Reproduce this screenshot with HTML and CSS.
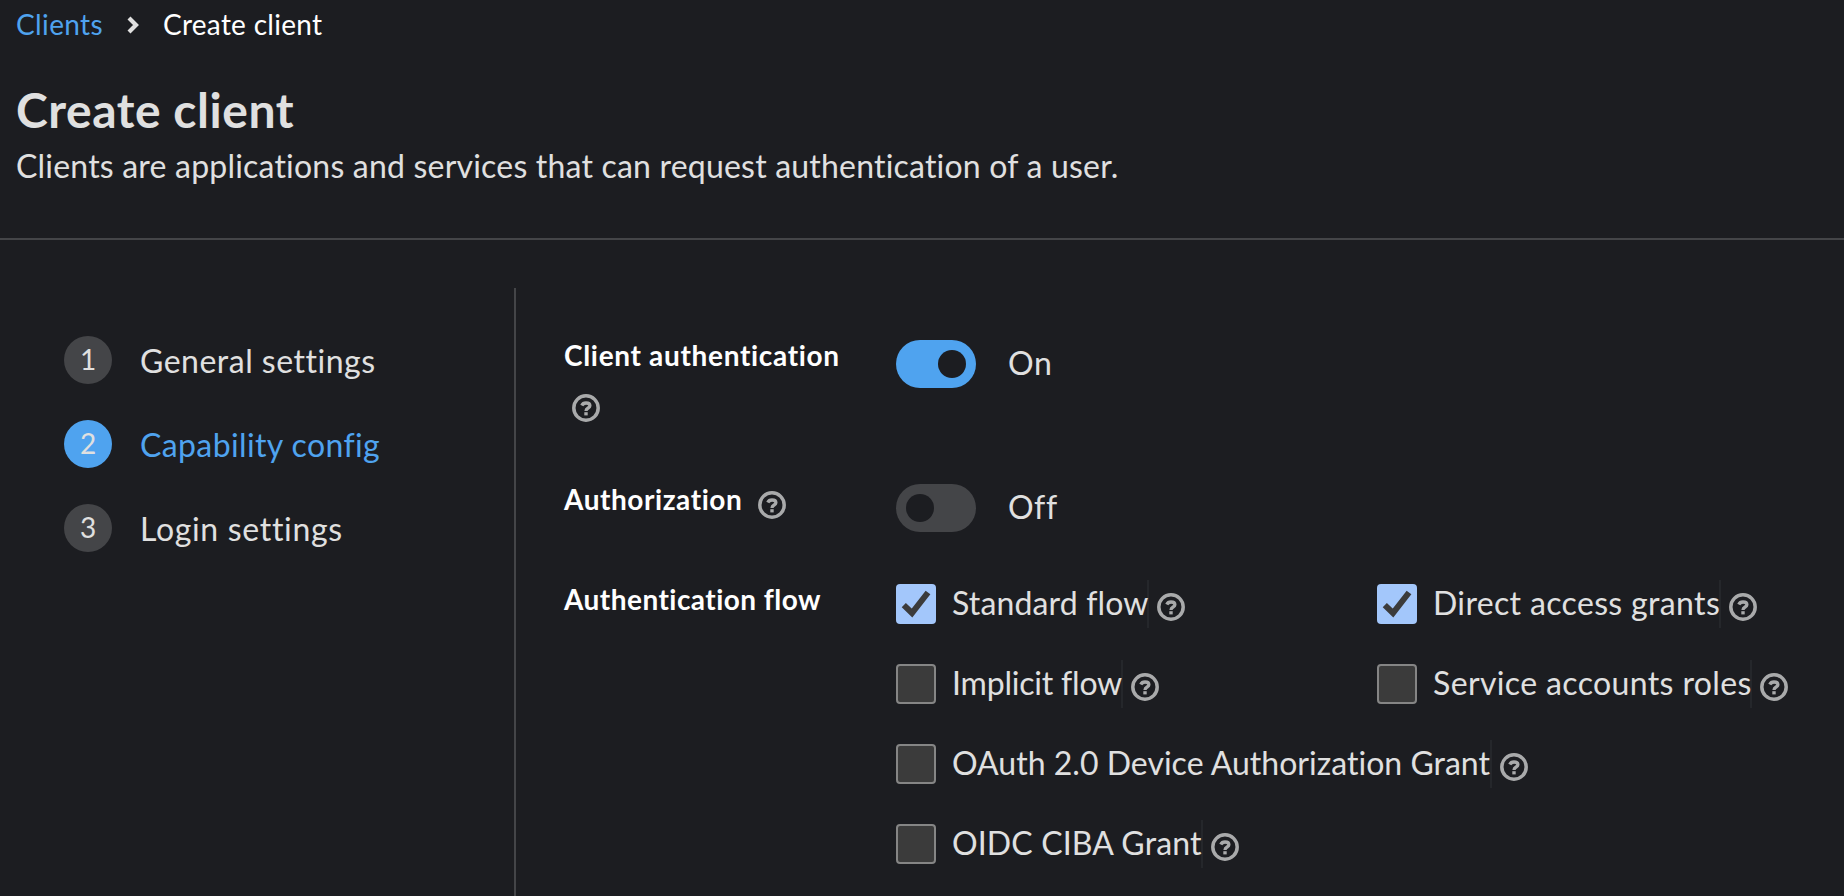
FILE: index.html
```html
<!DOCTYPE html>
<html lang="en">
<head>
<meta charset="utf-8">
<title>Create client</title>
<link rel="stylesheet" href="styles.css">
</head>
<body>
<svg class="sprite" aria-hidden="true">
  <symbol id="help" viewBox="0 0 28 28">
    <circle cx="14" cy="14" r="12.2" fill="none" stroke="currentColor" stroke-width="3.5"/>
    <path d="M9.8 11.5C10.6 9.7 12 9 14 9C16.5 9 17.9 10 17.9 11.8C17.9 14.3 14 13.8 14 17" fill="none" stroke="currentColor" stroke-width="3.3"/>
    <rect x="12.3" y="18.2" width="3.4" height="3.2" fill="currentColor"/>
  </symbol>
  <symbol id="check" viewBox="0 0 40 40">
    <path d="M7.8 21.2L16 29L32 8.5" fill="none" stroke="currentColor" stroke-width="6"/>
  </symbol>
</svg>
<header class="page-header">
  <nav class="breadcrumb">
    <a class="crumb-link">Clients</a>
    <svg class="chevron" viewBox="0 0 12 18"><path d="M2 2L9 9L2 16" fill="none" stroke="currentColor" stroke-width="4.2"/></svg>
    <span class="crumb-current">Create client</span>
  </nav>
  <h1 class="title">Create client</h1>
  <p class="description">Clients are applications and services that can request authentication of a user.</p>
</header>
<main class="wizard">
  <ol class="steps">
    <li class="step"><span class="step-number">1</span><span class="step-name general">General settings</span></li>
    <li class="step current"><span class="step-number">2</span><span class="step-name capability">Capability config</span></li>
    <li class="step"><span class="step-number">3</span><span class="step-name login">Login settings</span></li>
  </ol>
  <form class="form">
    <div class="row">
      <div class="label-col stacked"><span class="label client-auth">Client authentication</span><svg class="help"><use href="#help"/></svg></div>
      <div class="switch on"><span class="track"><span class="knob"></span></span><span class="state">On</span></div>
    </div>
    <div class="row short">
      <div class="label-col"><span class="label authorization">Authorization</span><svg class="help"><use href="#help"/></svg></div>
      <div class="switch"><span class="track"><span class="knob"></span></span><span class="state">Off</span></div>
    </div>
    <div class="row">
      <div class="label-col"><span class="label auth-flow">Authentication flow</span></div>
      <div class="flows">
        <div class="flow"><span class="box checked"><svg><use href="#check"/></svg></span><span class="flow-name standard">Standard flow</span><svg class="help"><use href="#help"/></svg></div>
        <div class="flow"><span class="box checked"><svg><use href="#check"/></svg></span><span class="flow-name direct">Direct access grants</span><svg class="help"><use href="#help"/></svg></div>
        <div class="flow"><span class="box"></span><span class="flow-name implicit">Implicit flow</span><svg class="help"><use href="#help"/></svg></div>
        <div class="flow"><span class="box"></span><span class="flow-name service">Service accounts roles</span><svg class="help"><use href="#help"/></svg></div>
        <div class="flow wide"><span class="box"></span><span class="flow-name oauth">OAuth 2.0 Device Authorization Grant</span><svg class="help"><use href="#help"/></svg></div>
        <div class="flow wide"><span class="box"></span><span class="flow-name ciba">OIDC CIBA Grant</span><svg class="help"><use href="#help"/></svg></div>
      </div>
    </div>
  </form>
</main>
</body>
</html>
```
FILE: styles.css
```css
* { box-sizing: border-box; }
body {
  margin: 0;
  height: 896px;
  overflow: hidden;
  display: flex;
  flex-direction: column;
  background: #1c1d21;
  color: #e0e0e0;
  font: 32px/46px Lato, sans-serif;
  font-variant-ligatures: none;
  white-space: nowrap;
}
.sprite { display: none; }

.page-header {
  height: 240px;
  flex: none;
  padding: 4px 16px 0;
  border-bottom: 2px solid #444548;
}
.breadcrumb {
  display: flex;
  align-items: center;
  font-size: 28px;
  line-height: 41px;
}
.crumb-link { width: 88px; color: #4fa3ef; letter-spacing: 0.37px; }
.chevron { width: 12px; height: 18px; margin: 1px 24px 0 23px; }
.crumb-current { color: #fff; letter-spacing: 0.28px; }
.title {
  margin: 34px 0 0;
  font-size: 48px;
  line-height: 62px;
  font-weight: 700;
  letter-spacing: 0.55px;
}
.description { margin: 0; line-height: 49px; letter-spacing: 0.2px; }

.wizard { flex: 1; display: flex; padding-top: 48px; }
.steps {
  width: 516px;
  flex: none;
  margin: 0;
  padding: 48px 0 0 64px;
  list-style: none;
  display: flex;
  flex-direction: column;
  gap: 36px;
  border-right: 2px solid #444548;
}
.step { display: flex; gap: 28px; height: 48px; }
.step-number {
  width: 48px;
  height: 48px;
  border-radius: 50%;
  background: #444548;
  font-size: 28px;
  line-height: 46px;
  text-align: center;
}
.step-name { line-height: 49px; }
.current .step-number { background: #4fa3ef; }
.current .step-name { color: #4fa3ef; }
.general { letter-spacing: 0.5px; }
.capability { letter-spacing: 0.38px; }
.login { letter-spacing: 0.68px; }

.form { padding: 46px 0 0 48px; }
.row { display: flex; height: 144px; }
.row.short { height: 100px; }
.label-col { width: 332px; display: flex; }
.label-col.stacked { display: block; }
.label {
  display: block;
  color: #fff;
  font-size: 28px;
  line-height: 42px;
  font-weight: 700;
}
.client-auth { letter-spacing: 0.68px; }
.authorization { width: 178px; letter-spacing: 0.56px; }
.auth-flow { letter-spacing: 0.46px; }
.help { display: block; flex: none; width: 28px; height: 28px; color: #a9aaab; }
.label-col .help { margin: 12.5px 0 0 16px; }
.label-col.stacked .help { margin: 18px 0 0 8px; }

.switch { display: flex; gap: 32px; padding-top: 6px; }
.track {
  width: 80px;
  height: 48px;
  padding: 10px;
  border-radius: 24px;
  background: #444548;
}
.knob { display: block; width: 28px; height: 28px; border-radius: 50%; background: #1c1d21; }
.on .track { background: #4fa3ef; }
.on .knob { margin-left: 32px; }
.state { line-height: 45px; letter-spacing: 0.6px; }

.flows {
  display: grid;
  grid-template-columns: 481px auto;
  grid-auto-rows: 48px;
  row-gap: 32px;
  padding-top: 2px;
}
.flow { display: flex; height: 48px; }
.flow.wide { grid-column: 1 / -1; }
.box {
  width: 40px;
  height: 40px;
  margin: 4px 16px 0 0;
  border: 2px solid #858585;
  border-radius: 4px;
  background: #3b3b3b;
}
.box.checked { border: 0; background: #a3c7fb; color: #3b3b3b; }
.box svg { display: block; width: 40px; height: 40px; }
.flow-name { height: 48px; line-height: 45px; border-right: 2px solid #25272b; }
.flow .help { margin: 13px 0 0 8px; }
.standard { width: 197px; letter-spacing: 0.15px; }
.direct { width: 288px; letter-spacing: 0.35px; }
.implicit { width: 171px; letter-spacing: -0.2px; }
.service { width: 319px; letter-spacing: 0.37px; }
.oauth { width: 540px; letter-spacing: 0.02px; }
.ciba { width: 251px; letter-spacing: 0.14px; }
```
